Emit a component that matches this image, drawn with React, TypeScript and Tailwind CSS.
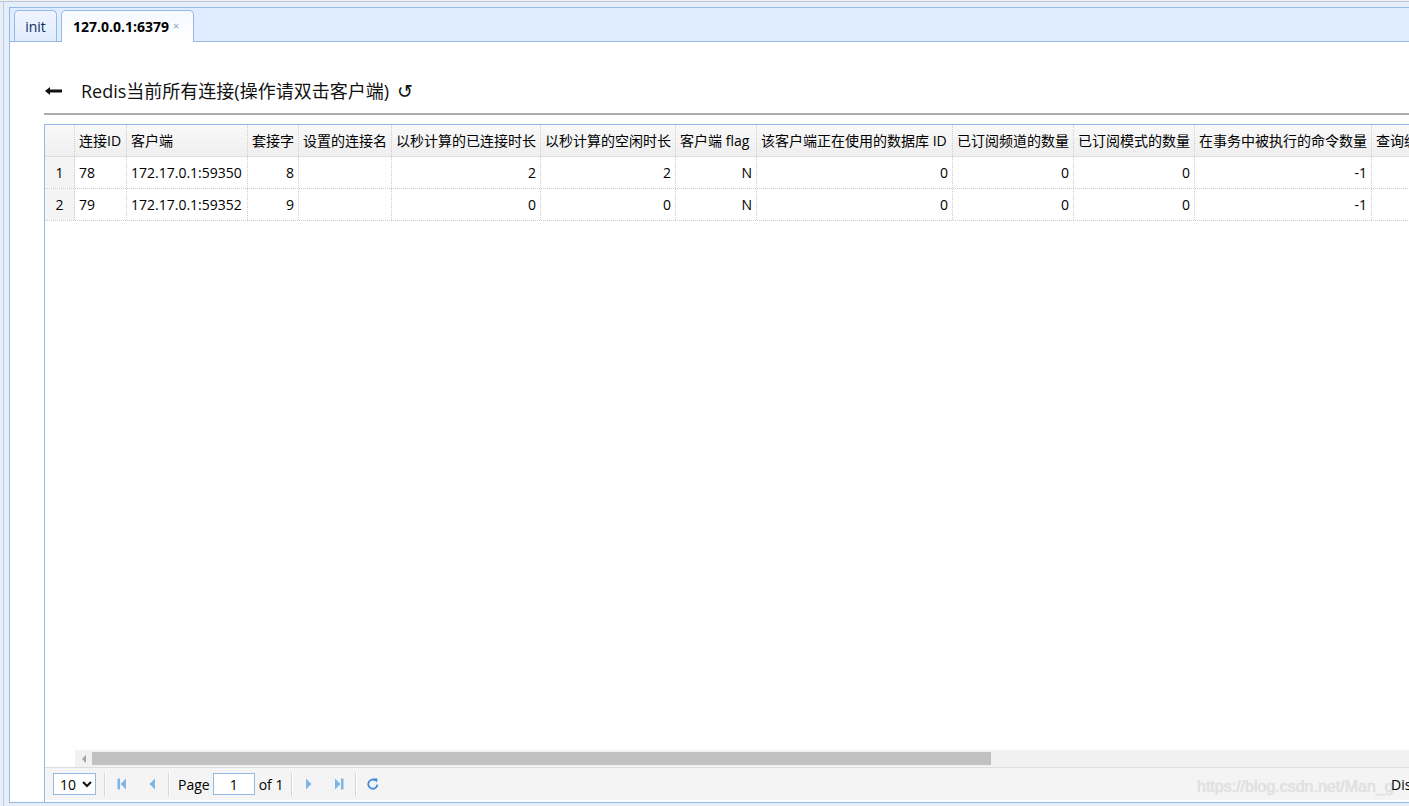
import React from 'react';

const font = { fontFamily: '"Open Sans", "Noto Sans CJK SC", sans-serif' };

const columns = [
  { title: '连接ID', w: 52, align: 'left' },
  { title: '客户端', w: 121, align: 'left' },
  { title: '套接字', w: 51, align: 'right' },
  { title: '设置的连接名', w: 93, align: 'left' },
  { title: '以秒计算的已连接时长', w: 149, align: 'right' },
  { title: '以秒计算的空闲时长', w: 135, align: 'right' },
  { title: '客户端 flag', w: 81, align: 'right' },
  { title: '该客户端正在使用的数据库 ID', w: 196, align: 'right' },
  { title: '已订阅频道的数量', w: 121, align: 'right' },
  { title: '已订阅模式的数量', w: 121, align: 'right' },
  { title: '在事务中被执行的命令数量', w: 177, align: 'right' },
  { title: '查询缓冲区的长度', w: 130, align: 'right' },
];

const rows = [
  ['78', '172.17.0.1:59350', '8', '', '2', '2', 'N', '0', '0', '0', '-1', '0'],
  ['79', '172.17.0.1:59352', '9', '', '0', '0', 'N', '0', '0', '0', '-1', '0'],
];

function PagerIcon({ kind }: { kind: 'first' | 'prev' | 'next' | 'last' }) {
  return (
    <svg width="16" height="16" viewBox="0 0 16 16" className="shrink-0">
      {kind === 'first' && (
        <>
          <rect x="3.5" y="2.5" width="2.5" height="11" fill="#7fb6e8" />
          <polygon points="12,2.5 12,13.5 6.5,8" fill="#7fb6e8" />
        </>
      )}
      {kind === 'prev' && <polygon points="11,2.5 11,13.5 5.5,8" fill="#7fb6e8" />}
      {kind === 'next' && <polygon points="5,2.5 5,13.5 10.5,8" fill="#7fb6e8" />}
      {kind === 'last' && (
        <>
          <polygon points="4,2.5 4,13.5 9.5,8" fill="#7fb6e8" />
          <rect x="10" y="2.5" width="2.5" height="11" fill="#7fb6e8" />
        </>
      )}
    </svg>
  );
}

function Sep() {
  return <div className="w-px h-[23px] bg-[#d4d4d4] mx-[8px] border-r border-white box-content" />;
}

export default function App() {
  return (
    <div className="h-screen w-full overflow-hidden bg-[#f0f0f0] text-[#000]" style={font}>
      <div className="h-full pt-[1px]">
        <div className="h-full border-t border-[#b7c9e4] bg-[#e9eef5] pl-[3px]">
          <div className="h-full border-l border-[#b9cbe6] bg-[#e6eefa] pl-[5px] pt-[5px]">
            {/* tabs panel */}
            <div className="h-[796px] border-l border-t border-b border-[#95b8e7] bg-white flex flex-col">
              <div className="h-[34px] bg-[#e0ecff] border-b border-[#95b8e7] flex items-end pl-[4px] gap-[4px] shrink-0">
                <div className="h-[31px] w-[43px] rounded-t-[5px] border border-b-0 border-[#95b8e7] bg-gradient-to-b from-[#eff5ff] to-[#e0ecff] flex items-center justify-center text-[14px] text-[#0e2d5f]">
                  init
                </div>
                <div className="h-[32px] -mb-px w-[133px] rounded-t-[5px] border border-b-0 border-[#95b8e7] bg-gradient-to-b from-[#f6f9ff] to-white flex items-center pl-[11px] text-[14px] font-bold text-[#000]">
                  127.0.0.1:6379
                  <span className="ml-[4px] text-[11px] font-normal text-[#8aa3c7]">×</span>
                </div>
              </div>

              {/* content */}
              <div className="flex-1 flex flex-col pl-[34px] pt-[36px] min-h-0">
                <div className="flex items-center h-[26px] pl-[1px]">
                  <svg width="18" height="10" viewBox="0 0 18 10" className="shrink-0">
                    <path d="M0 5 L5 1 L5 3.6 L17 3.6 L17 6.4 L5 6.4 L5 9 Z" fill="#111" />
                  </svg>
                  <span className="ml-[18px] text-[18px] text-[#111] leading-none">Redis当前所有连接(操作请双击客户端)</span>
                  <span className="ml-[8px] text-[19px] text-[#111] leading-none">↺</span>
                </div>
                <div className="mt-[9px] h-[2px] bg-[#ababab] w-[1400px]" />

                {/* datagrid */}
                <div className="mt-[9px] flex-1 flex flex-col border-l border-t border-[#95b8e7] min-h-0 w-[1600px]">
                  <div className="flex-1 flex flex-col min-h-0">
                    <div className="flex h-[32px] bg-gradient-to-b from-[#f9f9f9] to-[#efefef] border-b border-[#dddddd] text-[14px] text-[#000]">
                      <div className="w-[30px] shrink-0 border-r border-dotted border-[#ccc]" />
                      {columns.map((c) => (
                        <div
                          key={c.title}
                          style={{ width: c.w }}
                          className="shrink-0 border-r border-dotted border-[#ccc] px-[4px] flex items-center justify-start whitespace-nowrap overflow-hidden"
                        >
                          {c.title}
                        </div>
                      ))}
                    </div>
                    {rows.map((r, i) => (
                      <div key={i} className="flex h-[32px] border-b border-dotted border-[#ccc] text-[14px] text-[#000]">
                        <div className="w-[30px] shrink-0 border-r border-dotted border-[#ccc] bg-[#f4f4f4] flex items-center justify-center">
                          {i + 1}
                        </div>
                        {columns.map((c, j) => (
                          <div
                            key={j}
                            style={{ width: c.w }}
                            className={`shrink-0 border-r border-dotted border-[#ccc] px-[4px] flex items-center whitespace-nowrap overflow-hidden ${c.align === 'right' ? 'justify-end' : 'justify-start'}`}
                          >
                            {r[j]}
                          </div>
                        ))}
                      </div>
                    ))}
                    <div className="flex-1" />
                    {/* horizontal scrollbar */}
                    <div className="flex h-[17px] shrink-0">
                      <div className="w-[30px] shrink-0 bg-white" />
                      <div className="flex-1 bg-[#f1f1f1] flex items-center">
                        <div className="w-[17px] h-[17px] flex items-center justify-center">
                          <svg width="6" height="8" viewBox="0 0 6 8">
                            <polygon points="5,0 5,8 1,4" fill="#a3a3a3" />
                          </svg>
                        </div>
                        <div className="w-[899px] h-[13px] bg-[#c1c1c1]" />
                      </div>
                    </div>
                  </div>

                  {/* pager */}
                  <div className="relative h-[33px] shrink-0 bg-[#f4f4f4] border-t border-[#dddddd] flex items-center pl-[8px] text-[14px] text-[#000]">
                    <div className="w-[43px] h-[22px] border border-[#95b8e7] bg-white flex items-center pl-[6px] gap-[6px]">
                      <span>10</span>
                      <svg width="10" height="7" viewBox="0 0 10 7">
                        <path d="M1 1 L5 5 L9 1" stroke="#111" strokeWidth="2" fill="none" />
                      </svg>
                    </div>
                    <Sep />
                    <div className="flex items-center gap-[14px]">
                      <PagerIcon kind="first" />
                      <PagerIcon kind="prev" />
                    </div>
                    <Sep />
                    <span>Page</span>
                    <div className="ml-[3px] w-[42px] h-[22px] border border-[#95b8e7] bg-white flex items-center justify-center">1</div>
                    <span className="ml-[4px]">of 1</span>
                    <Sep />
                    <div className="flex items-center gap-[14px]">
                      <PagerIcon kind="next" />
                      <PagerIcon kind="last" />
                    </div>
                    <Sep />
                    <svg width="14" height="14" viewBox="0 0 14 14" className="ml-[1px]">
                      <path d="M9.8 3.6 A4.6 4.6 0 1 0 11.4 7.6" stroke="#3d8fd8" strokeWidth="1.8" fill="none" />
                      <polygon points="7.6,1.4 11.6,1.6 11,5.6" fill="#3d8fd8" />
                    </svg>
                    <span className="absolute left-[1152px] top-[7px] text-[16px] text-[#e2e2e2] whitespace-nowrap" style={{ fontFamily: '"Liberation Sans", sans-serif', textShadow: '0 0 1px #d4d4d4' }}>
                      https://blog.csdn.net/Man_g
                    </span>
                    <span className="absolute left-[1346px] top-[6px] whitespace-nowrap">Displaying 1 to 2 of 2 items</span>
                  </div>
                  <div className="h-[2px] bg-white shrink-0" />
                </div>
              </div>
            </div>
          </div>
        </div>
      </div>
    </div>
  );
}
